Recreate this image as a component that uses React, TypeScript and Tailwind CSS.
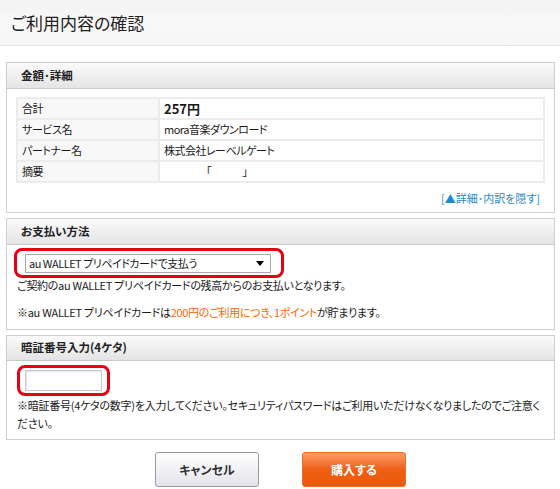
import React from "react";

const font = {
  fontFamily: '"Noto Sans CJK JP", "Noto Sans", "Liberation Sans", sans-serif',
};

function SectionHeader({ title, h }: { title: string; h: string }) {
  return (
    <div
      className={`${h} flex items-center pl-[14px] border-b border-[#c8c8c8] bg-gradient-to-b from-[#fbfbfb] to-[#e4e4e4] text-[11.5px] font-bold text-[#222]`}
    >
      {title}
    </div>
  );
}

const rows: [string, string][] = [
  ["合計", "257円"],
  ["サービス名", "mora音楽ダウンロード"],
  ["パートナー名", "株式会社レーベルゲート"],
  ["摘要", "「　　　」"],
];

export default function App() {
  return (
    <div
      className="w-[560px] h-[489px] bg-white text-[#1a1a1a] text-[11px] [font-feature-settings:'palt'] overflow-hidden"
      style={font}
    >
      <div className="h-[46px] flex items-center pl-[11px] bg-gradient-to-b from-[#f3f3f3] via-[#f8f8f8] to-[#f6f6f6] border-b border-[#e4e4e4]">
        <h1 className="text-[17px] text-[#222] leading-none">ご利用内容の確認</h1>
      </div>

      <div className="flex flex-col gap-[5px] mt-[16px] ml-[6px] w-[549px]">
        {/* 金額・詳細 */}
        <div className="border border-[#cfcfcf]">
          <SectionHeader title="金額･詳細" h="h-[26px]" />
          <div className="px-[9px] pt-[8px] pb-[7px]">
            <table className="w-full border-collapse">
              <tbody>
                {rows.map(([k, v], i) => (
                  <tr key={k} className="h-[21px]">
                    <td className="w-[142px] border-2 border-[#ececec] bg-[#f8f8f8] pl-[4px] leading-none tracking-[-0.4px]">
                      {k}
                    </td>
                    <td
                      className={`border-2 border-[#ececec] leading-none ${
                        i === 0 ? "font-bold text-[13px]" : "tracking-[-0.5px]"
                      } ${i === 3 ? "pl-[46px]" : "pl-[4px]"}`}
                    >
                      {v}
                    </td>
                  </tr>
                ))}
              </tbody>
            </table>
            <div className="mt-[8px] h-[14px] flex justify-end pr-[5px] text-[11px] leading-[14px] text-[#1f8ad0]">
              [▲詳細･内訳を隠す]
            </div>
          </div>
        </div>

        {/* お支払い方法 */}
        <div className="border border-[#cfcfcf]">
          <SectionHeader title="お支払い方法" h="h-[26px]" />
          <div className="pt-[3px] pb-[10px] pl-[10px]">
            <div className="ml-[-3px] w-[270px] h-[30px] border-[3px] border-[#e60012] rounded-[8px] flex items-center pl-[8px]">
              <div className="w-[246px] h-[19px] border border-[#a9a9a9] bg-white flex items-center justify-between pl-[3px] pr-[6px] text-[11px] leading-none tracking-[-0.5px]">
                <span>au WALLET プリペイドカードで支払う</span>
                <svg width="8" height="5" viewBox="0 0 8 5">
                  <path d="M0 0h8L4 5z" fill="#000" />
                </svg>
              </div>
            </div>
            <p className="h-[14px] leading-[14px] tracking-[-0.3px] whitespace-nowrap">
              ご契約のau WALLET プリペイドカードの残高からのお支払いとなります。
            </p>
            <p className="mt-[13px] h-[14px] leading-[14px] tracking-[-0.3px] whitespace-nowrap">
              ※au WALLET プリペイドカードは
              <span className="text-[#ff6600]">200円のご利用につき、1ポイント</span>
              が貯まります。
            </p>
          </div>
        </div>

        {/* 暗証番号入力 */}
        <div className="border border-[#cfcfcf]">
          <SectionHeader title="暗証番号入力(4ケタ)" h="h-[25px]" />
          <div className="pt-[4px] pb-[7px] pl-[10px] pr-[4px]">
            <div className="w-[93px] h-[31px] border-[3px] border-[#e60012] rounded-[8px] flex items-center justify-center">
              <div className="w-[77px] h-[21px] border border-[#c9c9d6] bg-white shadow-[inset_1px_1px_1px_#e6e6ee]" />
            </div>
            <p className="leading-[18px] whitespace-nowrap tracking-[-0.25px]">
              ※暗証番号(4ケタの数字)を入力してください。セキュリティパスワードはご利用いただけなくなりましたのでご注意く
              <br />
              ださい。
            </p>
          </div>
        </div>
      </div>

      <div className="mt-[12px] flex justify-center gap-[43px] pl-[1px]">
        <button className="w-[104px] h-[35px] rounded-[3px] border border-[#9a9aa6] bg-gradient-to-b from-[#ffffff] to-[#e4e4ea] text-[12px] font-bold text-[#333]">
          キャンセル
        </button>
        <button className="w-[104px] h-[35px] rounded-[3px] border border-[#e8712e] bg-gradient-to-b from-[#fb9a62] via-[#ef5f12] to-[#e85a0a] text-[12px] font-bold text-white">
          購入する
        </button>
      </div>
    </div>
  );
}
